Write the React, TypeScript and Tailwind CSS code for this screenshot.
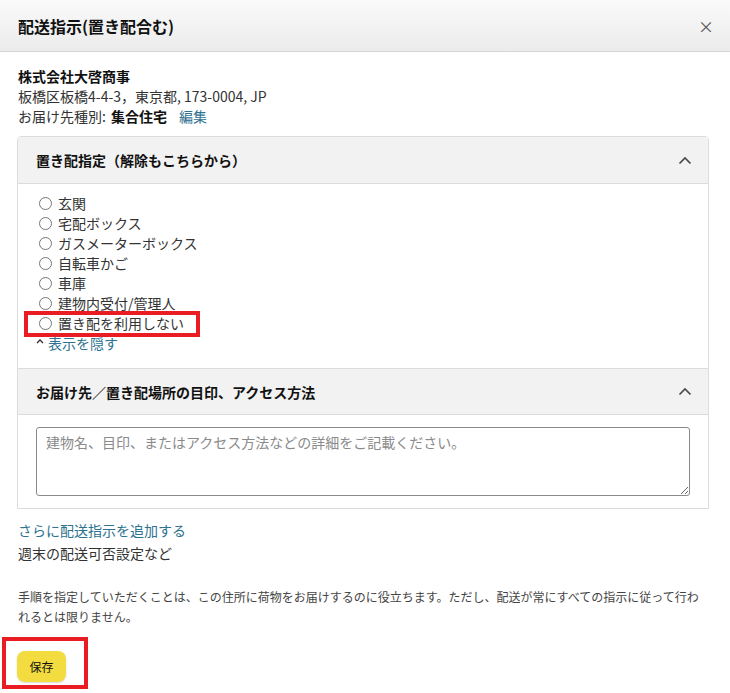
import React from "react";

const options = [
  "玄関",
  "宅配ボックス",
  "ガスメーターボックス",
  "自転車かご",
  "車庫",
  "建物内受付/管理人",
  "置き配を利用しない",
];

const Chevron = () => (
  <svg width="14" height="9" viewBox="0 0 14 9" className="block">
    <polyline points="1.5,7.5 7,2 12.5,7.5" fill="none" stroke="#4a4a4a" strokeWidth="1.7" />
  </svg>
);

const Radio = ({ label, marked }: { label: string; marked?: boolean }) => (
  <div className="relative flex h-5 items-center">
    <span className="mr-[6px] box-border h-[13px] w-[13px] rounded-full border border-[#767676] bg-white" />
    <span>{label}</span>
    {marked && (
      <span className="pointer-events-none absolute left-[-15px] top-[-2px] h-[26px] w-[176px] border-[4px] border-[#e91c24]" />
    )}
  </div>
);

export default function App() {
  return (
    <div
      className="w-[730px] min-h-[693px] bg-white text-[14px] leading-5 text-[#111]"
      style={{ fontFamily: '"Noto Sans CJK JP", "Noto Sans", sans-serif' }}
    >
      <div className="flex h-[52px] items-center justify-between border-b border-[#d5d5d5] bg-gradient-to-b from-[#fafafa] to-[#ebebeb] pl-[18px] pr-[16px]">
        <h1 className="text-[16px] font-bold text-[#111]">配送指示(置き配合む)</h1>
        <span className="text-[16px] text-[#555]">×</span>
      </div>

      <div className="pl-[17px] pr-[21px] pt-[14px]">
        <div className="pl-px">
          <p className="font-bold">株式会社大啓商事</p>
          <p className="text-[#333]">板橋区板橋4-4-3，東京都, 173-0004, JP</p>
          <p className="text-[#333]">
            お届け先種別: <span className="ml-[2px] font-bold text-[#111]">集合住宅</span>
            <span className="ml-[12px] text-[#2d7290]">編集</span>
          </p>
        </div>

        <div className="mt-[10px] rounded-t-[4px] border border-[#dcdcdc]">
          <div className="flex h-[47px] items-center justify-between border-b border-[#dcdcdc] bg-[#f2f2f2] pl-[18px] pr-[16px]">
            <span className="font-bold">置き配指定（解除もこちらから）</span>
            <Chevron />
          </div>
          <div className="pb-[15px] pl-[21px] pt-[9px] text-[#333]">
            {options.map((o, i) => (
              <Radio key={o} label={o} marked={i === options.length - 1} />
            ))}
            <div className="flex h-5 items-center">
              <svg width="8" height="6" viewBox="0 0 8 6" className="ml-[-3px] mr-[4px] mb-[5px] block">
                <polyline points="1,5 4,2 7,5" fill="none" stroke="#333" strokeWidth="1.4" />
              </svg>
              <span className="text-[#2d7290]">表示を隠す</span>
            </div>
          </div>

          <div className="flex h-[47px] items-center justify-between border-y border-[#dcdcdc] bg-[#f2f2f2] pl-[18px] pr-[16px]">
            <span className="font-bold">お届け先／置き配場所の目印、アクセス方法</span>
            <Chevron />
          </div>
          <div className="px-[18px] pb-[12px] pt-[12px]">
            <textarea
              className="box-border block h-[69px] w-full resize-y rounded-[3px] border border-[#8a8a8a] px-[9px] py-[4px] text-[14px] leading-5 text-[#111] placeholder:text-[#8a8a8a]"
              placeholder="建物名、目印、またはアクセス方法などの詳細をご記載ください。"
            />
          </div>
        </div>

        <div className="mt-[11px] pl-px">
          <p className="text-[#2d7290]">さらに配送指示を追加する</p>
          <p className="mt-[3px] text-[#333]">週末の配送可否設定など</p>
        </div>

        <p className="mt-[24px] pl-px text-[12px] leading-5 text-[#444]">
          手順を指定していただくことは、この住所に荷物をお届けするのに役立ちます。ただし、配送が常にすべての指示に従って行われるとは限りません。
        </p>

        <div className="relative mt-[24px] inline-block">
          <button className="h-[31px] w-[49px] rounded-[8px] bg-[#f2dc40] text-[12px] text-[#111] shadow-[0_1px_2px_rgba(0,0,0,0.15)]">
            保存
          </button>
          <span className="pointer-events-none absolute left-[-15px] top-[-14px] h-[52px] w-[86px] border-[4px] border-[#e91c24]" />
        </div>
      </div>
    </div>
  );
}
